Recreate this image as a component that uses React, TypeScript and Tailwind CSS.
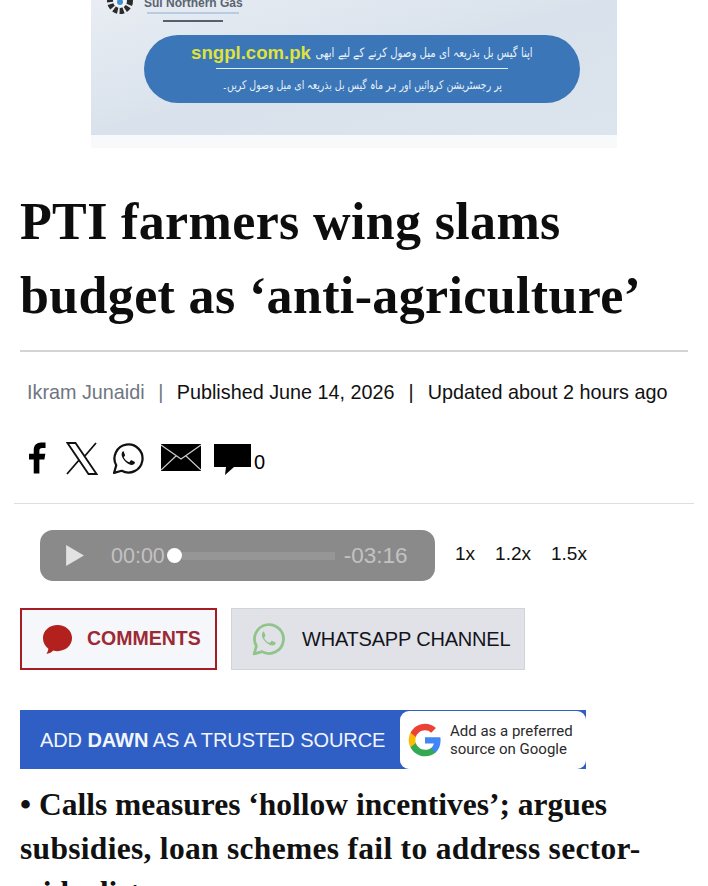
import React from 'react'

const serif = { fontFamily: '"Liberation Serif", serif' }

const WhatsAppIcon: React.FC<{ className?: string; stroke: string; width?: number }> = ({ className, stroke, width = 2.2 }) => (
  <svg viewBox="0 0 32 32" className={className} fill="none">
    <path
      d="M2 30l2.1-7.4A13.6 13.6 0 1 1 9.4 27.9L2 30z"
      stroke={stroke}
      strokeWidth={width}
      strokeLinejoin="round"
    />
    <path
      d="M11.6 8.8c-.5 0-1.4.5-1.9 1.5-.9 1.9-.3 4.4 1.9 7.1 2.3 2.9 5 4.5 7.2 4.8 1.6.2 3.1-.7 3.4-2.1.1-.5 0-.8-.4-1l-2.7-1.3c-.4-.2-.7-.1-1 .2l-1 1.3c-.2.3-.5.3-.9.2-2.1-.9-3.6-2.3-4.6-4.2-.2-.4-.1-.6.1-.9l.8-1c.2-.3.3-.6.1-.9l-1.1-2.8c-.2-.5-.5-.8-1-.9z"
      fill={stroke}
    />
  </svg>
)

const GoogleIcon: React.FC = () => (
  <svg viewBox="0 0 48 48" className="h-[34px] w-[34px]">
    <path fill="#4285F4" d="M46 24.5c0-1.6-.1-3.1-.4-4.5H24v9h12.4c-.5 2.900-2.200 5.300-4.600 7v5.800h7.400C43.500 37.800 46 31.700 46 24.500z" />
    <path fill="#34A853" d="M24 47c6.200 0 11.400-2 15.200-5.700l-7.400-5.800c-2 1.400-4.700 2.200-7.800 2.200-6 0-11.100-4-12.900-9.500H3.500v6C7.300 41.700 15 47 24 47z" />
    <path fill="#FBBC05" d="M11.100 28.200c-.5-1.400-.7-2.800-.7-4.200s.3-2.900.7-4.200v-6H3.500C2 16.800 1 20.300 1 24s.9 7.200 2.500 10.200l7.600-6z" />
    <path fill="#EA4335" d="M24 10.300c3.400 0 6.400 1.200 8.800 3.400l6.600-6.600C35.400 3.400 30.200 1 24 1 15 1 7.300 6.300 3.500 13.800l7.600 6c1.800-5.500 6.900-9.500 12.900-9.500z" />
  </svg>
)

const Banner: React.FC = () => (
  <div className="ml-[91px] w-[526px]">
    <div className="flex h-[135px] flex-col overflow-hidden bg-gradient-to-br from-[#e9edf3] via-[#d9e2ec] to-[#dce4ed]">
      <div className="flex h-[35px] items-start pl-[12px]">
        <svg viewBox="0 0 34 16" className="h-[16px] w-[34px] shrink-0">
          <circle cx="17" cy="1" r="10" fill="none" stroke="#2b2b2b" strokeWidth="6" strokeDasharray="4 2" />
          <circle cx="17" cy="1" r="6" fill="#f2f5f8" />
          <circle cx="17" cy="2" r="3" fill="#3f8fd0" />
        </svg>
        <div className="-mt-[4px] ml-[7px] flex flex-col items-center">
          <span className="text-[12px] leading-[14px] font-bold text-[#5a6470]" style={{ fontFamily: '"Liberation Sans", sans-serif' }}>
            Sui Northern Gas
          </span>
          <span className="mt-[2px] h-[2px] w-[92px] bg-[#b7cce2]" />
          <span className="mt-[6px] h-[2px] w-[60px] bg-[#56606c]" />
        </div>
      </div>
      <div className="ml-[53px] flex h-[68px] w-[436px] flex-col items-center rounded-[34px] bg-[#3a76b8] pt-[3px]">
        <div className="flex h-[30px] items-center justify-center gap-[5px]">
          <span className="text-[18.6px] leading-none font-bold text-[#dfe23c]" style={{ fontFamily: '"Liberation Sans", sans-serif' }}>
            sngpl.com.pk
          </span>
          <div className="flex w-[217px] justify-center">
            <span dir="rtl" className="inline-block scale-x-[0.78] text-[13px] whitespace-nowrap text-[#e8f0f8]" style={{ fontFamily: '"DejaVu Sans", sans-serif' }}>
              اپنا گیس بل بذریعہ ای میل وصول کرنے کے لیے ابھی
            </span>
          </div>
        </div>
        <div className="h-[1px] w-[292px] bg-[#e6eff8]" />
        <div className="flex h-[32px] w-[273px] items-center justify-center">
          <span dir="rtl" className="inline-block scale-x-[0.78] text-[12px] whitespace-nowrap text-[#e8f0f8]" style={{ fontFamily: '"DejaVu Sans", sans-serif' }}>
            پر رجسٹریشن کروائیں اور ہر ماہ گیس بل بذریعہ ای میل وصول کریں۔
          </span>
        </div>
      </div>
    </div>
    <div className="h-[13px] bg-[#f8f9fa]" />
  </div>
)

const Meta: React.FC = () => (
  <div className="mt-[16px] ml-[27px] flex h-[50px] items-center text-[19.8px] leading-none text-[#111]" style={{ fontFamily: '"Liberation Sans", sans-serif' }}>
    <span className="text-[#6f7680]">Ikram Junaidi</span>
    <span className="mx-[13.5px] text-[#6f7680]">|</span>
    <span>Published June 14, 2026</span>
    <span className="mx-[14px]">|</span>
    <span>Updated about 2 hours ago</span>
  </div>
)

const ShareIcons: React.FC = () => (
  <div className="mt-[21px] ml-[29px] flex h-[36px] items-start text-black">
    <svg viewBox="0 0 18 34" className="mt-[3px] h-[33px] w-[17px]">
      <path fill="#000" d="M5 33V18H0v-6h5V8c0-5 3-8 8-8h4.500v6H14c-2 0-3 1-3 2.800V12h6.300l-1 6H11v15z" />
    </svg>
    <svg viewBox="0 0 32 33" className="mt-[3px] ml-[20px] h-[33px] w-[32px]">
      <path d="M1 32L13.500 17.500M30 1L18 15M1.500 1h8L30.500 32h-8z" fill="none" stroke="#111" strokeWidth="1.800" />
    </svg>
    <WhatsAppIcon className="mt-[3px] ml-[14px] h-[33px] w-[33px]" stroke="#111" />
    <svg viewBox="0 0 40 27" className="mt-[5px] ml-[16px] h-[27px] w-[40px]">
      <rect width="40" height="27" fill="#000" />
      <path d="M0 1l20 14L40 1M0 26l15-14M40 26L25 12" fill="none" stroke="#ccc" strokeWidth="1.200" />
    </svg>
    <svg viewBox="0 0 37 31" className="mt-[5px] ml-[13px] h-[31px] w-[37px]">
      <path fill="#000" d="M0 0h37v23H20l-9 8 1-8H0z" />
    </svg>
    <span className="mt-[12px] ml-[3px] text-[20px] leading-[22px]" style={{ fontFamily: '"Liberation Sans", sans-serif' }}>0</span>
  </div>
)

const AudioPlayer: React.FC = () => (
  <div className="mt-[26px] ml-[40px] flex items-center" style={{ fontFamily: '"Liberation Sans", sans-serif' }}>
    <div className="flex h-[51px] w-[395px] items-center rounded-[13px] bg-[#8a8a8a] pl-[25px]">
      <svg viewBox="0 0 18 20" className="h-[21px] w-[19px] shrink-0">
        <path fill="#e2e2e2" d="M1 0l17 10L1 20z" />
      </svg>
      <span className="mt-[2px] ml-[27px] text-[21.5px] leading-none text-[#c2c2c2]">00:00</span>
      <div className="ml-[2px] flex items-center">
        <span className="h-[15px] w-[15px] shrink-0 rounded-full bg-white" />
        <span className="h-[8px] w-[153px] bg-[#969696]" />
      </div>
      <span className="mt-[2px] ml-[9px] text-[22.5px] leading-none text-[#c2c2c2]">-03:16</span>
    </div>
    <div className="-mt-[3px] ml-[20px] flex gap-[20px] text-[19px] text-[#111]">
      <span>1x</span>
      <span>1.2x</span>
      <span>1.5x</span>
    </div>
  </div>
)

const ActionButtons: React.FC = () => (
  <div className="mt-[27px] ml-[20px] flex h-[62px] gap-[14px]" style={{ fontFamily: '"Liberation Sans", sans-serif' }}>
    <div className="flex w-[197px] items-center border-2 border-[#a61c24] bg-[#f6f7fa] pl-[20px]">
      <svg viewBox="0 0 32 32" className="h-[31px] w-[31px]">
        <path fill="#b3211f" d="M16 1c8 0 15 5.500 15 13.500S24 28 16 28c-1.500 0-3-.2-4.300-.6C9.500 29.500 7 31 4.500 30.500c1.300-1.300 2-3.200 2-5C3 23 1 19 1 14.500 1 6.500 8 1 16 1z" />
      </svg>
      <span className="ml-[14px] text-[19.5px] font-bold text-[#9c2a35]">COMMENTS</span>
    </div>
    <div className="flex w-[294px] items-center border border-[#d0d4da] bg-[#e0e2e7] pl-[20px]">
      <WhatsAppIcon className="h-[34px] w-[34px]" stroke="#8fc48a" width={2.6} />
      <span className="ml-[16px] text-[20px] tracking-[-0.2px] text-[#14141c]">WHATSAPP CHANNEL</span>
    </div>
  </div>
)

const TrustedSource: React.FC = () => (
  <div className="mt-[40px] ml-[20px] flex h-[59px] w-[566px] items-center justify-between bg-[#2f5fc4] pl-[20px]" style={{ fontFamily: '"Liberation Sans", sans-serif' }}>
    <span className="text-[20px] tracking-[-0.08px] text-[#f2f5fc]">
      ADD <b>DAWN</b> AS A TRUSTED SOURCE
    </span>
    <div className="flex h-[58px] w-[186px] items-center rounded-[9px] bg-white pl-[8px]">
      <GoogleIcon />
      <div className="ml-[8px] text-[15px] leading-[18px] text-[#2a2a2a]" style={{ fontFamily: 'Roboto, sans-serif' }}>
        Add as a preferred
        <br />
        source on Google
      </div>
    </div>
  </div>
)

export default function App() {
  return (
    <div className="h-[886px] w-[708px] overflow-hidden bg-white text-black">
      <Banner />

      <h1 className="mt-[37px] ml-[20px] w-[685px] text-[52px] leading-[74px] font-bold tracking-[0.35px] text-[#0d0d0d]" style={serif}>
        PTI farmers wing slams
        <br />
        budget as ‘anti-agriculture’
      </h1>

      <div className="mt-[17px] ml-[20px] h-[2px] w-[668px] bg-[#d4d4d4]" />
      <Meta />
      <ShareIcons />
      <div className="mt-[28px] ml-[14px] h-[1px] w-[680px] bg-[#dedede]" />
      <AudioPlayer />
      <ActionButtons />
      <TrustedSource />

      <p className="mt-[14px] ml-[20px] w-[680px] text-[31.5px] leading-[44px] font-bold whitespace-nowrap text-[#111]" style={serif}>
        • Calls measures ‘hollow incentives’; argues
        <br />
        <span className="tracking-[0.3px]">subsidies, loan schemes fail to address sector-</span>
        <br />
        wide distress
      </p>
    </div>
  )
}
